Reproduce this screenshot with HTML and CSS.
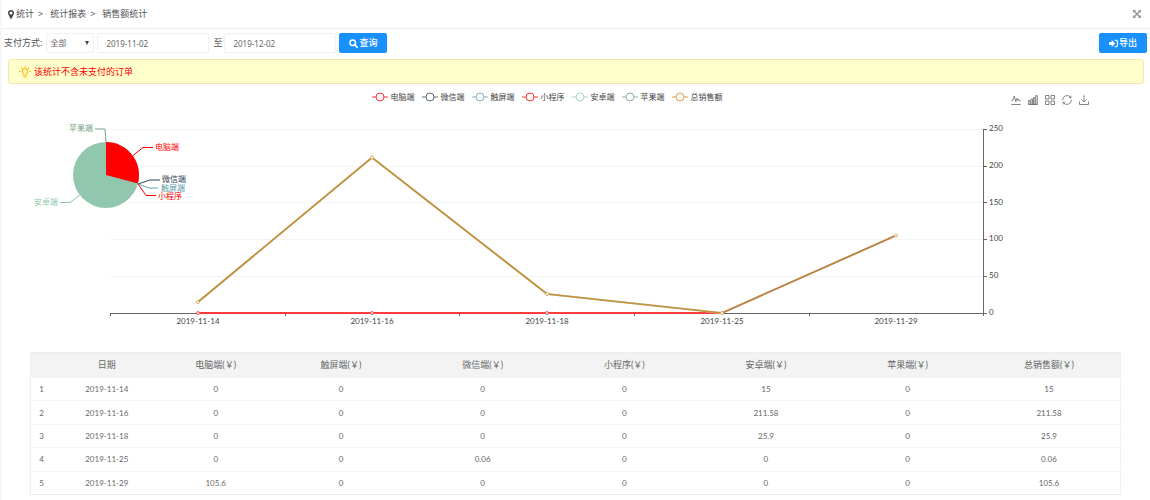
FILE: index.html
```html
<!DOCTYPE html>
<html lang="zh-CN">
<head>
<meta charset="utf-8">
<meta name="viewport" content="width=device-width, initial-scale=1">
<title>销售额统计</title>
<link rel="stylesheet" href="styles.css">
</head>
<body>
<div class="page">
  <header class="topbar">
    <nav class="crumbs" aria-label="位置">
      <svg class="pin" viewBox="0 0 6 9" aria-hidden="true"><path fill-rule="evenodd" d="M3 0a3 3 0 0 1 3 3c0 1-.5 1.800-.9 2.600L3.500 8.700h-1L.9 5.600C.5 4.800 0 4 0 3a3 3 0 0 1 3-3zm0 1.500a1.500 1.500 0 1 0 0 3 1.500 1.500 0 0 0 0-3z"/></svg>
      <a href="#">统计</a><span class="sep">&gt;</span>
      <a href="#">统计报表</a><span class="sep">&gt;</span>
      <a href="#">销售额统计</a>
    </nav>
    <button class="expand" type="button" aria-label="全屏">
      <svg viewBox="0 0 8 8" aria-hidden="true"><path d="M0 0h3L2.100.9 4 2.900 5.900.9 5 0h3v3L7.100 2.100 5.100 4l2 1.900L8 5v3H5l.9-.9L4 5.100l-1.900 2L3 8H0V5l.9.9L2.900 4l-2-1.900L0 3z"/></svg>
    </button>
  </header>

  <form class="filters">
    <label class="label" for="pay">支付方式:</label>
    <span class="select-box">
      <select id="pay" class="field select"><option>全部</option></select>
    </span>
    <input class="field date" type="text" value="2019-11-02" aria-label="开始日期">
    <label class="label to" for="end">至</label>
    <input id="end" class="field date" type="text" value="2019-12-02">
    <button class="btn" type="button">
      <svg class="btn-icon" viewBox="0 0 9 9" aria-hidden="true"><circle cx="3.700" cy="3.700" r="2.800" fill="none" stroke="#fff" stroke-width="1.500"/><path d="M5.800 5.800 8.300 8.300" stroke="#fff" stroke-width="1.700" stroke-linecap="round"/></svg>查询
    </button>
    <button class="btn export" type="button">
      <svg class="btn-icon" viewBox="0 0 9 9" aria-hidden="true"><path fill="#fff" d="M0 3h2.700V1l3.500 3.500L2.700 8V6H0z"/><path d="M5.500 1.300h1.700q1.200 0 1.200 1.200v4q0 1.200-1.200 1.200H5.500" fill="none" stroke="#fff" stroke-width="1.100"/></svg>导出
    </button>
  </form>

  <p class="notice">
    <svg class="bulb" viewBox="0 0 12 12" aria-hidden="true" fill="none" stroke="#fcbf24" stroke-width="1.200" stroke-linecap="round"><path d="M4.700 9C4.700 7.500 3.300 7.200 3.300 5.400a2.700 2.700 0 0 1 5.400 0C8.700 7.200 7.300 7.500 7.300 9zM4.900 10.800h2.200M6 .5v.6M2.300 1.900l.5.500M9.700 1.900l-.5.500M.7 5.400h.6M10.700 5.400h.6"/></svg>
    该统计不含未支付的订单
  </p>

  <section class="chart" aria-label="销售额图表">
    <div class="chart-head">
      <ul class="legend">
        <li class="key c-red"><svg viewBox="0 0 16 10"><path d="M0 5h16"/><circle cx="8" cy="5" r="4"/></svg>电脑端</li>
        <li class="key c-navy"><svg viewBox="0 0 16 10"><path d="M0 5h16"/><circle cx="8" cy="5" r="4"/></svg>微信端</li>
        <li class="key c-teal"><svg viewBox="0 0 16 10"><path d="M0 5h16"/><circle cx="8" cy="5" r="4"/></svg>触屏端</li>
        <li class="key c-red"><svg viewBox="0 0 16 10"><path d="M0 5h16"/><circle cx="8" cy="5" r="4"/></svg>小程序</li>
        <li class="key c-mint"><svg viewBox="0 0 16 10"><path d="M0 5h16"/><circle cx="8" cy="5" r="4"/></svg>安卓端</li>
        <li class="key c-green"><svg viewBox="0 0 16 10"><path d="M0 5h16"/><circle cx="8" cy="5" r="4"/></svg>苹果端</li>
        <li class="key c-gold"><svg viewBox="0 0 16 10"><path d="M0 5h16"/><circle cx="8" cy="5" r="4"/></svg>总销售额</li>
      </ul>
      <div class="tools">
        <button class="tool" type="button" aria-label="折线图"><svg viewBox="0 0 10 10"><path d="M.3 5.500h1.500L3.300 1l1.500 5.800 1.300-3.500.9 2.200.7-1.200.6 1.200h1.400M.3 9.500h9.400"/></svg></button>
        <button class="tool" type="button" aria-label="柱状图"><svg viewBox="0 0 10 10"><path d="M.6 5.500h1.500v3.800H.6zM3 4h1.500v5.300H3zM5.400 2.500h1.500v6.800H5.400zM7.800.6h1.500v8.700H7.800zM.4 9.500h9.200"/></svg></button>
        <button class="tool" type="button" aria-label="平铺"><svg viewBox="0 0 10 10"><path d="M.5.5h3.500V4H.5zM6 .5h3.500V4H6zM.5 6H4v3.500H.5zM6 6h3.500v3.500H6z"/></svg></button>
        <button class="tool" type="button" aria-label="还原"><svg viewBox="0 0 10 10"><path d="M.6 5.200A4.400 4.400 0 0 1 8.700 2.600M9.400 4.800A4.400 4.400 0 0 1 1.300 7.400M8.900.7v2.100H6.900M1.100 9.300V7.200h2"/></svg></button>
        <button class="tool" type="button" aria-label="保存"><svg viewBox="0 0 10 10"><path d="M5 .2v6.500M2.500 4.500 5 6.900l2.500-2.400M.5 6.500v3h9v-3"/></svg></button>
      </div>
    </div>

    <svg class="plot" viewBox="2 108 1148 232" role="img" aria-label="各端销售额">
      <path class="grid" d="M110 129.500H983M110 166.500H983M110 202.500H983M110 239.500H983M110 276.500H983"/>
      <path class="axis" d="M110 313.500H983.500M983.500 129V316M983 129.500h4M983 166.500h4M983 202.500h4M983 239.500h4M983 276.500h4M983 313.500h4M110.500 313v3M285.500 313v3M459.500 313v3M634.500 313v3M809.500 313v3"/>
      <g class="axis-text">
        <text x="989" y="131">250</text><text x="989" y="168">200</text><text x="989" y="205">150</text>
        <text x="989" y="241">100</text><text x="989" y="278">50</text><text x="989" y="315">0</text>
      </g>
      <g class="axis-text mid">
        <text x="198" y="324">2019-11-14</text><text x="372" y="324">2019-11-16</text><text x="547" y="324">2019-11-18</text>
        <text x="722" y="324">2019-11-25</text><text x="896" y="324">2019-11-29</text>
      </g>

      <path class="zero" d="M198 313H722"/>
      <g class="dots zero-dots"><circle cx="198" cy="313" r="1.500"/><circle cx="372" cy="313" r="1.500"/><circle cx="547" cy="313" r="1.500"/></g>
      <path class="shade" d="M198 302 372 157.500 547 294 722 313 896 235.500"/>
      <path class="total" d="M198 302 372 157.500 547 294 722 313"/>
      <path class="total late" d="M722 313 896 235.500"/>
      <g class="dots"><circle cx="198" cy="302" r="1.500"/><circle cx="372" cy="157.500" r="1.500"/><circle cx="547" cy="294" r="1.500"/><circle cx="722" cy="313" r="1.500"/><circle cx="896" cy="235.500" r="1.500"/></g>

      <circle cx="106" cy="175" r="33" fill="#91c7ae"/>
      <path d="M106 175V142A33 33 0 0 1 137.900 183.500Z" fill="#f00"/>
      <g class="leader">
        <path stroke="#f00" d="M133 155.500 143 147.500H153"/>
        <path stroke="#2f4554" d="M138 184 150 180H160"/>
        <path stroke="#61a0a8" d="M138 184 149 188H158"/>
        <path stroke="#f00" d="M138 184 146 195.500H156"/>
        <path stroke="#91c7ae" d="M80 195 70 202.500H60"/>
        <path stroke="#749f83" d="M106 142 105 129H95"/>
      </g>
      <g class="pie-text">
        <text x="155" y="150" fill="#f00">电脑端</text>
        <text x="162" y="182" fill="#2f4554">微信端</text>
        <text x="161" y="191" fill="#61a0a8">触屏端</text>
        <text x="158" y="199" fill="#f00">小程序</text>
        <text x="34" y="205" fill="#91c7ae">安卓端</text>
        <text x="69" y="131" fill="#749f83">苹果端</text>
      </g>
    </svg>
  </section>

  <table class="data">
    <colgroup><col class="w-no"><col class="w-s"><col class="w-s"><col class="w-m" span="6"></colgroup>
    <thead><tr><th></th><th>日期</th><th>电脑端(￥)</th><th>触屏端(￥)</th><th>微信端(￥)</th><th>小程序(￥)</th><th>安卓端(￥)</th><th>苹果端(￥)</th><th>总销售额(￥)</th></tr></thead>
    <tbody>
      <tr><td>1</td><td>2019-11-14</td><td>0</td><td>0</td><td>0</td><td>0</td><td>15</td><td>0</td><td>15</td></tr>
      <tr><td>2</td><td>2019-11-16</td><td>0</td><td>0</td><td>0</td><td>0</td><td>211.58</td><td>0</td><td>211.58</td></tr>
      <tr><td>3</td><td>2019-11-18</td><td>0</td><td>0</td><td>0</td><td>0</td><td>25.9</td><td>0</td><td>25.9</td></tr>
      <tr><td>4</td><td>2019-11-25</td><td>0</td><td>0</td><td>0.06</td><td>0</td><td>0</td><td>0</td><td>0.06</td></tr>
      <tr><td>5</td><td>2019-11-29</td><td>105.6</td><td>0</td><td>0</td><td>0</td><td>0</td><td>0</td><td>105.6</td></tr>
    </tbody>
  </table>
</div>
</body>
</html>
```
FILE: styles.css
```css
* { box-sizing: border-box; }
body {
  margin: 0;
  background: #fff;
  color: #555;
  font: 9px/12px "Noto Sans", "Noto Sans CJK SC", sans-serif;
}
button, input, select { font: inherit; color: inherit; }
button { cursor: pointer; }
a { color: inherit; text-decoration: none; }
.page { min-height: 100vh; border-left: 2px solid #f7f7f7; }

.topbar {
  display: flex;
  align-items: center;
  justify-content: space-between;
  height: 29px;
  padding: 0 9px 0 6px;
  border-bottom: 1px solid #eee;
}
.crumbs { display: flex; align-items: center; }
.pin { width: 6px; height: 9px; margin-right: 2px; fill: #444; }
.sep { margin: 0 7px 0 4px; }
.expand { display: flex; padding: 0; border: 0; background: none; }
.expand svg { width: 8px; height: 8px; fill: #999; }

.filters { display: flex; align-items: center; padding: 4px 3px 0 2px; }
.label { margin-right: 4px; white-space: nowrap; }
.to { margin: 0 2px 0 4px; }
.field {
  height: 20px;
  border: 1px solid #f0f0f0;
  border-radius: 2px;
  background: #fff;
  color: #666;
  font-size: 8px;
}
.select-box { position: relative; margin-right: 3px; }
.select-box::after {
  content: "";
  position: absolute;
  top: 8px;
  right: 5px;
  border: 2px solid transparent;
  border-top: 4px solid #444;
  border-bottom: 0;
  pointer-events: none;
}
.select { display: block; width: 48px; padding: 0 3px; appearance: none; }
.date { width: 112px; padding: 0 8px; }
.btn {
  display: flex;
  align-items: center;
  justify-content: center;
  gap: 1px;
  width: 48px;
  height: 20px;
  margin-left: 3px;
  padding: 0;
  border: 0;
  border-radius: 2px;
  background: #1890ff;
  color: #fff;
  font-weight: 500;
}
.btn-icon { width: 9px; height: 9px; }
.export { margin-left: auto; }

.notice {
  display: flex;
  align-items: center;
  gap: 3px;
  height: 25px;
  margin: 6px 6px 0;
  padding: 0 10px;
  border: 1px solid #fbe2a8;
  border-radius: 3px;
  background: #ffc;
  color: #f00;
}
.bulb { width: 12px; height: 12px; }

.chart-head {
  display: grid;
  grid-template-columns: 1fr auto 1fr;
  align-items: center;
  height: 24px;
  padding: 4px 61px 0 3px;
}
.legend {
  grid-column: 2;
  display: flex;
  gap: 7px;
  margin: 0;
  padding: 0 0 2px;
  list-style: none;
  color: #444;
  font-size: 8px;
}
.key { display: flex; align-items: center; gap: 3px; white-space: nowrap; }
.key svg { width: 16px; height: 10px; fill: #fff; stroke: currentColor; }
.key path { stroke-width: 1; }
.c-red svg { color: #f33; }
.c-navy svg { color: #5d6e7a; }
.c-teal svg { color: #80b1b8; }
.c-mint svg { color: #aad4c1; }
.c-green svg { color: #8fb29b; }
.c-gold svg { color: #d9a04c; }
.tools { display: flex; justify-content: flex-end; gap: 7px; padding-top: 3px; }
.tool { display: flex; padding: 0; border: 0; background: none; }
.tool svg { width: 10px; height: 10px; fill: none; stroke: #666; stroke-width: 0.8; }

.plot { display: block; width: 100%; height: auto; }
.grid { stroke: #f4f4f4; }
.axis { fill: none; stroke: #666; }
.axis-text { fill: #444; font: 8px Lato, sans-serif; }
.mid { text-anchor: middle; }
.zero { stroke: #ff3d3d; stroke-width: 2; }
.shade { fill: none; stroke: #ccc; stroke-width: 2; }
.total { fill: none; stroke: #c39136; stroke-width: 1.7; }
.late { stroke: #c0813a; }
.dots { fill: #fff; stroke: #c99a4c; stroke-width: 0.8; }
.zero-dots { stroke: #f33; }
.leader { fill: none; }
.pie-text { font: 8px "Liberation Sans", "Noto Sans CJK SC", sans-serif; }

.data {
  width: 95%;
  height: 143px;
  margin: 12px 29px 0 28px;
  border: 1px solid #eee;
  border-collapse: collapse;
  table-layout: fixed;
  color: #666;
  font: 8px/12px Lato, "Noto Sans CJK SC", sans-serif;
  text-align: center;
}
.w-no { width: 2%; }
.w-s { width: 10%; }
.w-m { width: 13%; }
.data th { height: 25px; padding: 0; background: #f3f3f3; font-size: 9px; font-weight: 400; }
.data td { padding: 0; border-top: 1px solid #f5f5f5; }
```
